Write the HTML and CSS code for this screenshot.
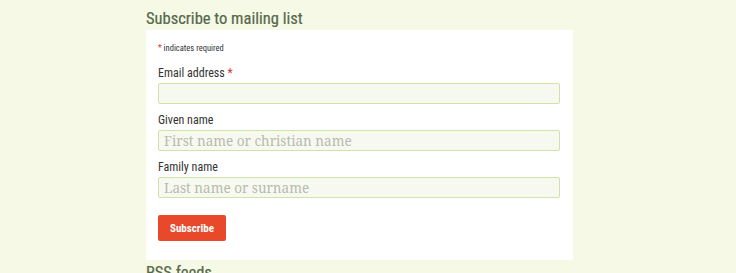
FILE: index.html
```html
<!DOCTYPE html>
<html>
<head>
<meta charset="utf-8">
<link rel="stylesheet" href="styles.css">
</head>
<body>
<div class="column">
  <h2 class="section-title">Subscribe to mailing list</h2>
  <form class="signup">
    <div class="required-note"><span class="star">*</span> indicates required</div>
    <div class="field">
      <label class="label" for="email">Email address <span class="star">*</span></label>
      <input class="input" id="email" type="email">
    </div>
    <div class="field">
      <label class="label" for="fname">Given name</label>
      <input class="input" id="fname" type="text" placeholder="First name or christian name">
    </div>
    <div class="field">
      <label class="label" for="lname">Family name</label>
      <input class="input" id="lname" type="text" placeholder="Last name or surname">
    </div>
    <button class="button" type="button">Subscribe</button>
  </form>
  <h2 class="section-title">RSS feeds</h2>
</div>
</body>
</html>
```

FILE: styles.css
```css
html, body {
  margin: 0;
  padding: 0;
  background: #f5f9e6;
}
body {
  font-family: "Roboto Condensed", "Lato", sans-serif;
  color: #333;
}
.column {
  width: 427px;
  margin-left: 146px;
}
.section-title {
  margin: 0;
  font-family: "Roboto Condensed", sans-serif;
  font-weight: 400;
  font-size: 16.5px;
  line-height: 22px;
  padding-top: 8px;
  color: #56684a;
  -webkit-text-stroke: 0.2px #56684a;
}
.signup {
  background: #fff;
  padding: 12px 13px 19px 12px;
  display: flex;
  flex-direction: column;
}
.required-note {
  font-size: 8.5px;
  line-height: 12px;
  color: #333;
  margin-bottom: 11px;
}
.star { color: #e0312a; }
.field {
  display: flex;
  flex-direction: column;
  margin-bottom: 8px;
}
.label {
  font-size: 12px;
  line-height: 16px;
  color: #333;
  margin-bottom: 2px;
}
.input {
  box-sizing: border-box;
  height: 21px;
  width: 100%;
  margin: 0;
  padding: 0 5px;
  border: 1px solid #cfe2a8;
  border-radius: 2px;
  background: #f7f9f0;
  font-family: "Noto Serif", "DejaVu Serif", serif;
  font-size: 13.5px;
  color: #333;
  outline: none;
}
.input::placeholder {
  color: #b7bbae;
}
.button {
  align-self: flex-start;
  margin-top: 9px;
  width: 68px;
  height: 26px;
  border: 0;
  border-radius: 2px;
  background: #e9492b;
  color: #fff;
  font-family: "Roboto Condensed", sans-serif;
  font-size: 11px;
  font-weight: 700;
  padding: 0;
}
.signup + .section-title {
  padding-top: 2px;
}
```
